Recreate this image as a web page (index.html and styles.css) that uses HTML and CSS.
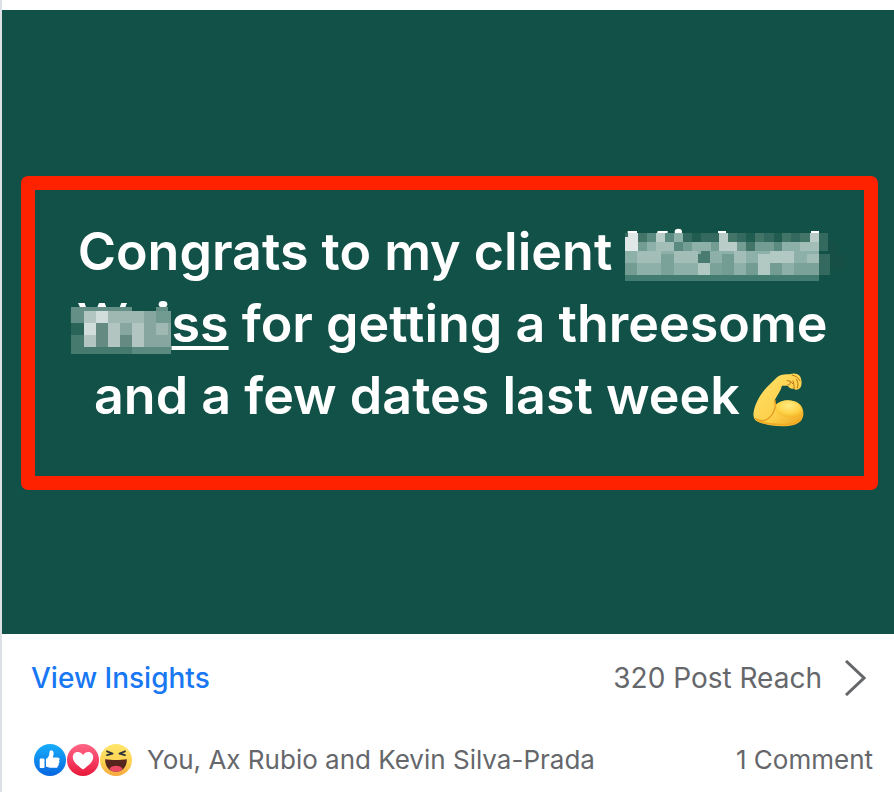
FILE: index.html
```html
<!DOCTYPE html>
<html lang="en">
<head>
    <meta charset="UTF-8">
    <meta name="viewport" content="width=device-width, initial-scale=1.0">
    <title>Post</title>
    <link rel="stylesheet" href="styles.css">
</head>
<body>
    <article class="post">
        <div class="post-banner">
            <div class="highlight">
                <p class="post-text">
                    Congrats to my client
                    <svg class="mosaic mosaic-first" viewBox="54 42 588 162" aria-label="hidden name">
                        <g fill="#fff">
                            <path d="M62 51h28v8H62zM152 51h30v7h-32zM333 51h24v7h-24zM612 51h24v7h-24z"/>
                            <ellipse cx="214" cy="53" rx="11" ry="9"/>
                        </g>
                        <g shape-rendering="crispEdges">
                            <path fill="#33695e" d="M54 57h609v27H54zM635 84h28v27h-28zM635 120h34v63h-34z"/>
                            <path fill="#164f45" d="M663 84h27v36h-27zM669 120h45v45h-45z"/>
                            <path fill="#8db0a8" d="M54 84h581v99H54z"/>
                            <path fill="#427b6f" d="M54 183h581v18H54z"/>
                            <path fill="#dfe8e6" d="M62 57h31v54H54V70h8z"/>
                            <path fill="#427568" d="M93 57h27v27H93zM363 57h27v27h-27zM445 57h27v27h-27zM525 57h27v27h-27zM580 57h28v27h-28zM417 84h28v27h-28z"/>
                            <path fill="#5b8a80" d="M120 57h27v27h-27zM174 57h27v27h-27zM201 84h27v27h-27zM500 84h25v27h-25z"/>
                            <path fill="#b9ccc8" d="M147 57h27v27h-27zM337 57h26v54h-26zM363 84h27v27h-27zM608 57h27v27h-27z"/>
                            <path fill="#8db0a8" d="M201 57h27v27h-27z"/>
                            <path fill="#215c50" d="M417 57h28v27h-28zM500 57h25v27h-25zM255 57h27v27h-27z"/>
                            <path fill="#739c93" d="M93 84h27v27H93zM228 84h27v27h-27zM312 84h25v27h-25zM390 84h27v27h-27zM445 84h55v27h-55zM345 120h37v63h-37zM416 147h37v36h-37zM489 147h36v36h-36zM54 147h36v36H54z"/>
                            <path fill="#a3bdb7" d="M147 84h54v27h-54zM580 84h55v27h-55zM90 111h72v36H90zM200 111h72v36h-72zM382 111h34v36h-34zM599 120h36v27h-36z"/>
                            <path fill="#4a7b70" d="M272 120h10v-9h28v36h-38z"/>
                            <path fill="#b2c8c3" d="M272 147h37v36h-37zM453 120h36v63h-36zM489 111h72v36h-72z"/>
                            <path fill="#7ba299" d="M162 147h38v36h-38zM309 147h36v36h-36zM561 147h38v36h-38zM599 147h36v36h-36zM162 120h38v27h-38z"/>
                        </g>
                    </svg>
                    <br>
                    <svg class="mosaic mosaic-second" viewBox="36 33 300 162" aria-label="hidden name">
                        <g fill="#fff">
                            <path d="M57 42h20l4 13H63zM120 42h17l5 13h-27zM187 42h17l-5 13h-17z"/>
                            <ellipse cx="312" cy="46" rx="13" ry="10"/>
                        </g>
                        <g shape-rendering="crispEdges">
                            <path fill="#648f86" d="M36 54h39v48H36zM75 54h144v13H75zM291 54h36v13h-36z"/>
                            <path fill="#1b594d" d="M33 66h3v36h-3z"/>
                            <path fill="#2a6357" d="M36 102h38v36H36z"/>
                            <path fill="#467a6f" d="M36 138h38v57H36zM74 174h145v21H74z"/>
                            <path fill="#5b8a80" d="M219 174h117v21H219z"/>
                            <path fill="#86a69f" d="M74 67h262v107H74z"/>
                            <path fill="#b2c5c1" d="M74 67h36v35H74zM147 102h36v36h-36zM219 102h36v72h-36zM74 138h36v36H74zM147 138h36v36h-36z"/>
                            <path fill="#d0dddb" d="M110 67h37v35h-37zM74 102h36v36H74z"/>
                            <path fill="#9fb8b2" d="M147 67h72v35h-72zM219 67h36v35h-36zM291 102h36v36h-36z"/>
                            <path fill="#648a81" d="M110 102h37v72h-37zM183 138h36v36h-36z"/>
                            <path fill="#719a91" d="M291 67h45v35h-45z"/>
                        </g>
                    </svg><a class="name" href="#">ss</a> for getting a threesome
                    <br>
                    and a few dates last week
                    <svg class="flex-arm" viewBox="40 42 156 160" aria-label="flexed biceps">
                        <defs>
                            <linearGradient id="skin" x1="0" y1="0" x2="1" y2="1">
                                <stop offset="0" stop-color="#ffe36e"/>
                                <stop offset=".6" stop-color="#fdd04a"/>
                                <stop offset="1" stop-color="#eda41f"/>
                            </linearGradient>
                            <radialGradient id="bicep" cx=".5" cy=".3" r=".7">
                                <stop offset="0" stop-color="#ffeb83"/>
                                <stop offset=".6" stop-color="#fed54b"/>
                                <stop offset="1" stop-color="#f4b429"/>
                            </radialGradient>
                        </defs>
                        <path fill="url(#skin)" d="M42 158C46 132 62 104 82 83L112 54C119 46 134 44 149 45C163 40 176 43 181 51C187 62 187 76 183 84C177 92 169 94 163 88C156 90 148 85 144 79L127 79C123 96 112 108 105 123L107 137C121 122 145 119 165 126C184 132 193 149 191 168C188 188 171 198 146 200C108 203 69 195 49 184C42 178 40 168 42 158Z"/>
                        <path fill="url(#bicep)" d="M107 139C122 122 145 120 165 127C184 134 192 151 186 165C175 177 149 178 126 168C114 163 105 154 107 139Z"/>
                        <path fill="none" stroke="#e39c22" stroke-width="4" stroke-linecap="round" d="M47 178C67 189 82 183 93 171C101 162 105 153 107 139"/>
                        <path fill="none" stroke="#f1aa22" stroke-width="5" stroke-linecap="round" d="M54 184C90 198 151 202 181 183M107 137L105 123"/>
                        <path fill="none" stroke="#b9781a" stroke-width="3" stroke-linecap="round" d="M142 64C150 63 155 67 159 73M145 77C151 76 153 72 152 67M160 65C163 75 164 81 163 88M170 60C176 66 176 78 173 86M157 47C168 49 176 56 181 64"/>
                    </svg>
                </p>
            </div>
        </div>

        <div class="insights">
            <a class="insights-link" href="#">View Insights</a>
            <a class="reach" href="#">
                320 Post Reach
                <svg class="chevron" viewBox="0 0 22 36" aria-hidden="true">
                    <path d="M2 1l18 17L2 35"/>
                </svg>
            </a>
        </div>

        <div class="feedback">
            <div class="reactions">
                <svg viewBox="0 0 32 32" aria-label="Like">
                    <defs>
                        <linearGradient id="like" x1="0" y1="0" x2="0" y2="1">
                            <stop offset="0" stop-color="#18aefb"/>
                            <stop offset="1" stop-color="#0866df"/>
                        </linearGradient>
                    </defs>
                    <circle cx="16" cy="16" r="16" fill="url(#like)"/>
                    <path fill="#fff" d="M6.500 14.500h3q1 0 1 1v7.500q0 1-1 1h-3q-.8 0-.8-1v-7.500q0-1 .8-1zM12 15c2-1 3-3 3.300-5 .1-2 .3-3.400 1.500-3.600 2.300-.3 3.200 2 2.700 4.200l-.7 2.800h4.700c2 0 2.700 2 1.400 3.100 1 .9.800 2.200-.3 2.800.6 1 .2 2.100-.8 2.500.2 1.200-.5 2-1.800 2H16c-1.700 0-2.700-.4-4-1.200z"/>
                </svg>
                <svg viewBox="0 0 32 32" aria-label="Love">
                    <defs>
                        <linearGradient id="love" x1="0" y1="0" x2="0" y2="1">
                            <stop offset="0" stop-color="#ff6685"/>
                            <stop offset=".5" stop-color="#f94065"/>
                            <stop offset="1" stop-color="#e61738"/>
                        </linearGradient>
                    </defs>
                    <circle cx="16" cy="16" r="16" fill="url(#love)"/>
                    <path fill="#fff" d="M16 25.500C12 22.500 5.800 18.500 5.800 13.200 5.800 7.500 13 6.200 16 11c3-4.800 10.200-3.500 10.200 2.200C26.200 18.500 20 22.500 16 25.500z"/>
                </svg>
                <svg viewBox="0 0 32 32" aria-label="Haha">
                    <defs>
                        <linearGradient id="haha" x1="0" y1="0" x2="0" y2="1">
                            <stop offset="0" stop-color="#ffe66b"/>
                            <stop offset=".6" stop-color="#ffd152"/>
                            <stop offset="1" stop-color="#f4a63e"/>
                        </linearGradient>
                    </defs>
                    <circle cx="16" cy="16" r="16" fill="url(#haha)"/>
                    <path fill="#56251e" d="M5.200 15.200c6 1 15.600 1 21.600 0 .3 7-4 12.600-10.800 12.600S4.900 22.200 5.200 15.200z"/>
                    <path fill="#ed4962" d="M9.400 24.900c2-4.100 11.200-4.100 13.200 0-3.200 3.900-10 3.900-13.200 0z"/>
                    <path fill="none" stroke="#303638" stroke-width="1.800" stroke-linecap="round" stroke-linejoin="round" d="M7 7.300l5.600 2.300-5.600 1.600M25 7.300l-5.600 2.300 5.600 1.600"/>
                </svg>
            </div>
            <span class="names">You, Ax Rubio and Kevin Silva-Prada</span>
            <a class="comments" href="#">1 Comment</a>
        </div>
    </article>
</body>
</html>
```
FILE: styles.css
```css
body {
    margin: 0;
    background-color: #ffffff;
    color: #65676b;
    font-family: Inter, "Liberation Sans", sans-serif;
}
a {
    color: inherit;
    text-decoration: none;
}
.post {
    border-left: 2px solid #dde0e4;
    padding-top: 10px;
}
.post-banner {
    padding: 166px 16px 144px 19px;
    background-color: #115147;
}
.highlight {
    padding: 26px 0 44px;
    border: 14px solid #ff2200;
    border-radius: 7px;
    background: linear-gradient(#115147, #115147) padding-box, #ff2200;
}
.post-text {
    margin: 0;
    color: #ffffff;
    font-size: 52px;
    font-weight: 600;
    line-height: 72px;
    text-align: center;
    white-space: nowrap;
}
.post-text svg {
    overflow: visible;
}
.mosaic {
    height: 54px;
    vertical-align: -12px;
}
.mosaic-first {
    width: 196px;
}
.mosaic-second {
    width: 100px;
}
.name {
    text-decoration: underline;
    text-decoration-thickness: 4px;
    text-underline-offset: 4px;
}
.flex-arm {
    width: 52px;
    height: 54px;
    vertical-align: -13px;
}
.insights {
    display: flex;
    justify-content: space-between;
    align-items: center;
    height: 88px;
    padding: 0 28px 0 29px;
    font-size: 28px;
}
.insights-link {
    color: #1877f2;
    font-weight: 500;
}
.reach {
    display: flex;
    align-items: center;
    gap: 22px;
}
.chevron {
    width: 22px;
    height: 36px;
    fill: none;
    stroke: #65676b;
    stroke-width: 3px;
}
.feedback {
    display: flex;
    align-items: center;
    padding: 21px 21px 15px 32px;
    font-size: 26px;
    line-height: 34px;
}
.reactions {
    display: flex;
    gap: 1px;
    margin-right: 15px;
}
.reactions svg {
    width: 32px;
    height: 32px;
}
.comments {
    margin-left: auto;
}
```
